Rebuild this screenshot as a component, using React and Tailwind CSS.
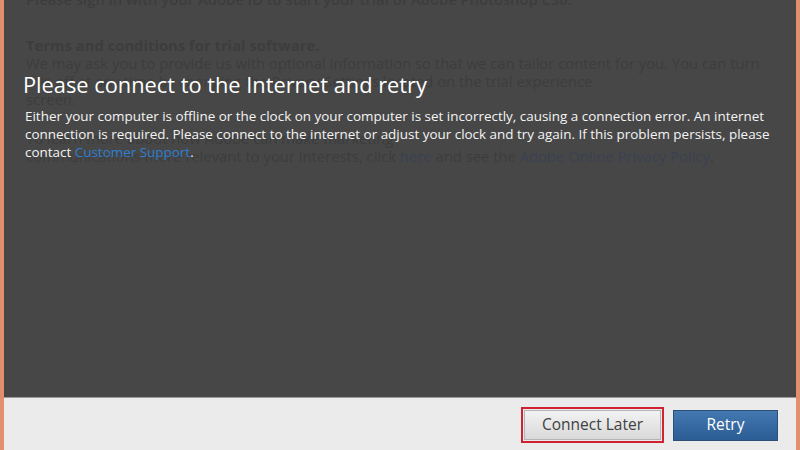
export default function App() {
  const font = { fontFamily: '"Open Sans", "Noto Sans", sans-serif' };

  return (
    <div className="w-[800px] h-[450px] flex flex-col overflow-hidden border-l-4 border-r-4 border-[#e2906c] bg-[#474747]" style={font}>
      {/* greyed-out sign-in page sitting behind the error message */}
      <div className="relative h-[397px] bg-[#474747]">
        <div className="px-[22px] -mt-[10px] text-[14.8px] leading-[18px] text-[#3d3d3d] whitespace-nowrap">
          <p className="font-semibold">Please sign in with your Adobe ID to start your trial of Adobe Photoshop CS6.</p>
          <p className="mt-[28px] font-bold">Terms and conditions for trial software.</p>
          <p>
            We may ask you to provide us with optional information so that we can tailor content for you. You can turn
            <br />
            this off at any time by changing the Privacy Settings located on the trial experience
            <br />
            screen.
          </p>
          <p className="mt-[21px]">
            To learn more about how Adobe can make marketing
            <br />
            communications more relevant to your interests, click <span className="text-[#3a4152]">here</span> and see the{' '}
            <span className="text-[#3a4152]">Adobe Online Privacy Policy</span>.
          </p>
        </div>

        {/* connection error message on top */}
        <div className="absolute inset-0 px-[19px] pt-[69px]">
          <h1 className="text-[21.8px] leading-[32px] font-normal text-white">
            Please connect to the Internet and retry
          </h1>
          <p className="mt-[6px] pl-[2px] text-[13.45px] leading-[18px] text-[#f4f4f4] whitespace-nowrap">
            Either your computer is offline or the clock on your computer is set incorrectly, causing a connection error. An internet
            <br />
            connection is required. Please connect to the internet or adjust your clock and try again. If this problem persists, please
            <br />
            contact <span className="text-[#2f7fd0]">Customer Support</span>.
          </p>
        </div>
      </div>

      {/* button bar */}
      <div className="flex-1 flex items-center justify-end gap-[9px] pr-[18px] pt-[2px] bg-[#ebebeb] border-t border-[#9a9a9a]">
        <div className="border-2 border-[#cf2331] p-[1px]">
          <button className="w-[137px] h-[30px] border border-[#b5b5b5] bg-gradient-to-b from-[#f2f2f2] to-[#d9d9d9] text-[15.5px] text-[#404040]">
            Connect Later
          </button>
        </div>
        <button className="w-[105px] h-[31px] border border-[#2c4f78] bg-gradient-to-b from-[#4378b0] to-[#2c5d95] text-[15.5px] text-white">
          Retry
        </button>
      </div>
    </div>
  );
}
